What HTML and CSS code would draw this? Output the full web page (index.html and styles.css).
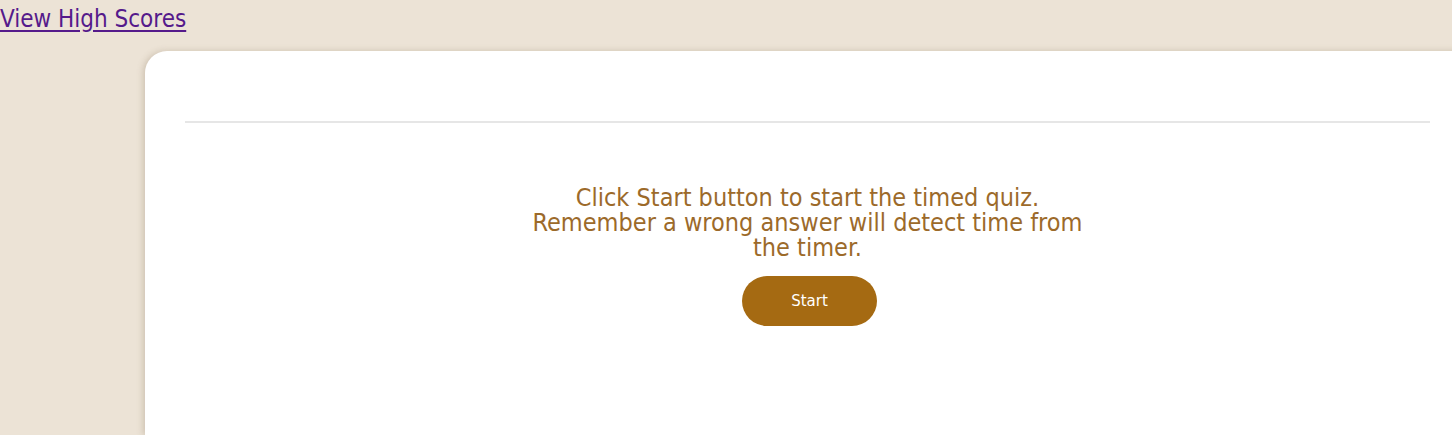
FILE: index.html
```html
<!DOCTYPE html>
<html lang="en">
<head>
<meta charset="utf-8">
<title>Timed Quiz</title>
<link rel="stylesheet" href="styles.css">
</head>
<body>
<header class="top">
  <a class="scores-link" href="#">View High Scores</a>
</header>
<main class="card">
  <div class="timer-bar"></div>
  <section class="intro">
    <p class="intro-text">Click Start button to start the timed quiz. Remember a wrong answer will detect time from the timer.</p>
    <button class="start-btn" type="button">Start</button>
  </section>
</main>
</body>
</html>
```
FILE: styles.css
```css
html, body {
  margin: 0;
  padding: 0;
  overflow: hidden;
}
body {
  background: #ece3d6;
  font-family: "DejaVu Sans", "Liberation Sans", sans-serif;
  font-stretch: condensed;
  height: 435px;
}
.top {
  height: 51px;
}
.scores-link {
  display: inline-block;
  font-size: 24px;
  line-height: 39px;
  color: #551a8b;
  text-decoration: underline;
  text-underline-offset: 3px;
}
.card {
  box-sizing: border-box;
  margin-left: 145px;
  width: 1325px;
  height: 384px;
  padding: 70px 40px 0;
  background: #fff;
  border-radius: 22px 0 0 0;
  box-shadow: -2px 0 6px rgba(120, 100, 70, 0.25);
}
.timer-bar {
  height: 2px;
  background: #e6e6e6;
}
.intro {
  display: flex;
  flex-direction: column;
  align-items: center;
  padding-top: 62px;
}
.intro-text {
  margin: 0;
  width: 575px;
  text-align: center;
  font-size: 25px;
  line-height: 25px;
  color: #9c6a2a;
}
.start-btn {
  margin: 16px 0 0 4px;
  width: 135px;
  height: 50px;
  border: none;
  border-radius: 25px;
  background: #a56a12;
  color: #fff;
  font-family: inherit;
  font-size: 15px;
}
```
